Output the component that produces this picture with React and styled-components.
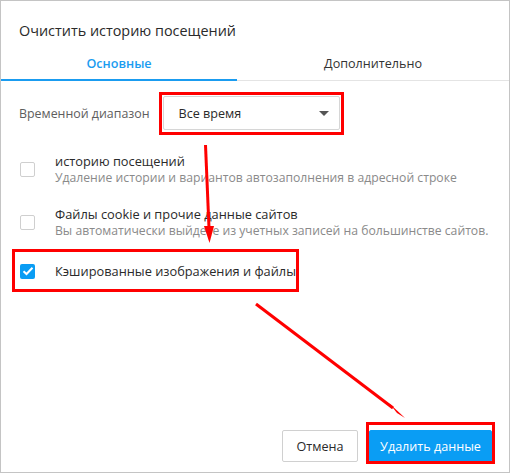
import { createGlobalStyle, styled } from "styled-components";

const GlobalStyle = createGlobalStyle`
  html, body {
    margin: 0;
    padding: 0;
    background: #ffffff;
  }
  body {
    font-family: "Open Sans", "Noto Sans", sans-serif;
  }
`;

const rows = [
  {
    id: "history",
    title: "историю посещений",
    note: "Удаление истории и вариантов автозаполнения в адресной строке",
    checked: false,
  },
  {
    id: "cookies",
    title: "Файлы cookie и прочие данные сайтов",
    note: "Вы автоматически выйдете из учетных записей на большинстве сайтов.",
    checked: false,
  },
  {
    id: "cache",
    title: "Кэшированные изображения и файлы",
    checked: true,
  },
];

export default function App() {
  return (
    <>
      <GlobalStyle />
      <SCDialog>
        <SCTitle>Очистить историю посещений</SCTitle>
        <SCTabs>
          <SCTab $active>Основные</SCTab>
          <SCTab>Дополнительно</SCTab>
        </SCTabs>

        <SCBody>
          <SCRange>
            <SCLabel>Временной диапазон</SCLabel>
            <SCSelect>
              <span>Все время</span>
              <SCCaret />
            </SCSelect>
          </SCRange>

          <SCList>
            {rows.map((row) => (
              <SCRow key={row.id} $single={!row.note}>
                <SCBox $checked={row.checked}>
                  {row.checked && (
                    <svg width="12" height="10" viewBox="0 0 12 10">
                      <path
                        d="M1.5 5.2 L4.5 8 L10.5 1.8"
                        fill="none"
                        stroke="#fff"
                        strokeWidth="2"
                      />
                    </svg>
                  )}
                </SCBox>
                <SCText>
                  <SCRowTitle>{row.title}</SCRowTitle>
                  {row.note && <SCNote>{row.note}</SCNote>}
                </SCText>
              </SCRow>
            ))}
          </SCList>
        </SCBody>

        <SCFooter>
          <SCButton>Отмена</SCButton>
          <SCButton $primary>Удалить данные</SCButton>
        </SCFooter>

        <SCMarks width="510" height="473" viewBox="0 0 510 473">
          <g fill="none" stroke="#ff0000" strokeWidth="3">
            <rect x="160.5" y="93.5" width="182" height="40" />
            <rect x="13.5" y="250.5" width="284" height="40" />
            <rect x="367.5" y="423.5" width="126" height="39" />
            <line x1="205.5" y1="145" x2="209" y2="228" />
            <line x1="256" y1="304" x2="393" y2="408" />
          </g>
          <g fill="#ff0000">
            <polygon points="204,226 214,226 209.5,243" />
            <polygon points="389,403 397,413 405,418" />
          </g>
        </SCMarks>
      </SCDialog>
    </>
  );
}

const SCDialog = styled.div`
  position: relative;
  width: 510px;
  height: 473px;
  box-sizing: border-box;
  border: 1px solid #c4c4c4;
  display: flex;
  flex-direction: column;
  background: #fff;
  overflow: hidden;
`;

const SCTitle = styled.h1`
  margin: 0;
  padding: 20px 18px 0;
  font-size: 14.4px;
  line-height: 20px;
  font-weight: 400;
  color: #2a2a2a;
`;

const SCTabs = styled.div`
  margin-top: 5px;
  display: grid;
  grid-template-columns: 236px 1fr;
  border-bottom: 1px solid #e4e4e4;
`;

const SCTab = styled.div`
  height: 35px;
  display: flex;
  align-items: center;
  justify-content: center;
  box-sizing: border-box;
  padding-top: 1px;
  font-size: 12.6px;
  font-weight: ${({ $active }) => ($active ? 600 : 400)};
  color: ${({ $active }) => ($active ? "#1a9cf0" : "#333")};
  border-bottom: 2px solid
    ${({ $active }) => ($active ? "#1a9cf0" : "transparent")};
  margin-bottom: -1px;
`;

const SCBody = styled.div`
  flex: 1;
  padding: 15px 18px 0;
`;

const SCRange = styled.div`
  display: flex;
  align-items: center;
  gap: 13px;
`;

const SCLabel = styled.span`
  font-size: 12.4px;
  color: #5e5e5e;
`;

const SCSelect = styled.div`
  width: 177px;
  height: 34px;
  box-sizing: border-box;
  border: 1px solid #d6d6d6;
  border-radius: 2px;
  display: flex;
  align-items: center;
  justify-content: space-between;
  padding: 0 10px 0 15px;
  font-size: 12.6px;
  color: #2a2a2a;
`;

const SCCaret = styled.i`
  width: 0;
  height: 0;
  border-left: 5px solid transparent;
  border-right: 5px solid transparent;
  border-top: 5px solid #555;
`;

const SCList = styled.div`
  margin-top: 19px;
  display: flex;
  flex-direction: column;
  gap: 13px;
`;

const SCRow = styled.div`
  display: flex;
  align-items: center;
  gap: 20px;
  padding-left: 1px;
  min-height: ${({ $single }) => ($single ? "34px" : "40px")};
  margin-top: ${({ $single }) => ($single ? "-1px" : "0")};
`;

const SCBox = styled.span`
  flex: none;
  width: 15px;
  height: 15px;
  box-sizing: border-box;
  border-radius: 2px;
  border: ${({ $checked }) => ($checked ? "none" : "1px solid #cfcfcf")};
  background: ${({ $checked }) => ($checked ? "#0a9df4" : "#fff")};
  display: flex;
  align-items: center;
  justify-content: center;
`;

const SCText = styled.div`
  display: flex;
  flex-direction: column;
  gap: 1px;
`;

const SCRowTitle = styled.span`
  font-size: 12.8px;
  line-height: 16px;
  color: #2a2a2a;
`;

const SCNote = styled.span`
  font-size: 12.2px;
  line-height: 16px;
  color: #8a8a8a;
`;

const SCFooter = styled.div`
  display: flex;
  justify-content: flex-end;
  gap: 11px;
  padding: 0 17px 10px;
`;

const SCButton = styled.button`
  height: 32px;
  padding: 0;
  width: ${({ $primary }) => ($primary ? "123px" : "76px")};
  border-radius: 2px;
  border: 1px solid ${({ $primary }) => ($primary ? "#0a9df4" : "#d0d0d0")};
  background: ${({ $primary }) => ($primary ? "#0a9df4" : "#fff")};
  color: ${({ $primary }) => ($primary ? "#fff" : "#2a2a2a")};
  font-family: inherit;
  font-size: 12.6px;
`;

const SCMarks = styled.svg`
  position: absolute;
  left: -1px;
  top: -1px;
  pointer-events: none;
`;
